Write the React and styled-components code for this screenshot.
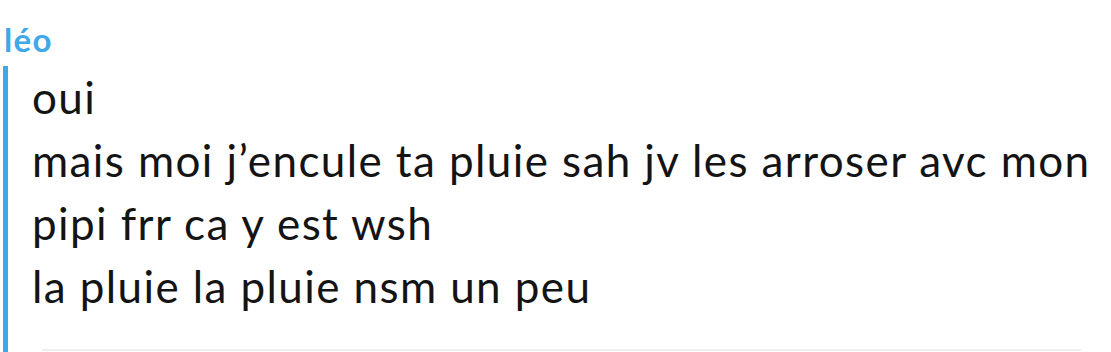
import styled, { createGlobalStyle } from "styled-components";

const Global = createGlobalStyle`
  html, body { margin: 0; padding: 0; background: #fff; }
  body { font-family: "Lato", "Noto Sans", sans-serif; overflow: hidden; }
`;

const Chat = styled.div`
  width: 1111px;
  height: 352px;
  padding-top: 21px;
  box-sizing: border-box;
  position: relative;
  overflow: hidden;
`;

const Sender = styled.div`
  color: #3ea8e9;
  font-weight: 700;
  font-size: 33px;
  line-height: 36px;
  letter-spacing: 1.4px;
  padding-left: 4px;
`;

const Group = styled.div`
  margin-top: 15px;
  margin-left: 3px;
  border-left: 5px solid #3ea8e9;
  padding-left: 24px;
  padding-bottom: 60px;
`;

const Message = styled.div`
  color: #141414;
  font-size: 44px;
  line-height: 63px;
  letter-spacing: 1.4px;
  &:first-child {
    margin-top: -6px;
  }
`;

const Divider = styled.div`
  position: absolute;
  left: 42px;
  right: 30px;
  bottom: 1px;
  height: 2px;
  background: #efefef;
`;

export default function App() {
  const messages = [
    "oui",
    "mais moi j’encule ta pluie sah jv les arroser avc mon pipi frr ca y est wsh",
    "la pluie la pluie nsm un peu",
  ];
  return (
    <>
      <Global />
      <Chat>
        <Sender>léo</Sender>
        <Group>
          {messages.map((m, i) => (
            <Message key={i}>{m}</Message>
          ))}
        </Group>
        <Divider />
      </Chat>
    </>
  );
}
